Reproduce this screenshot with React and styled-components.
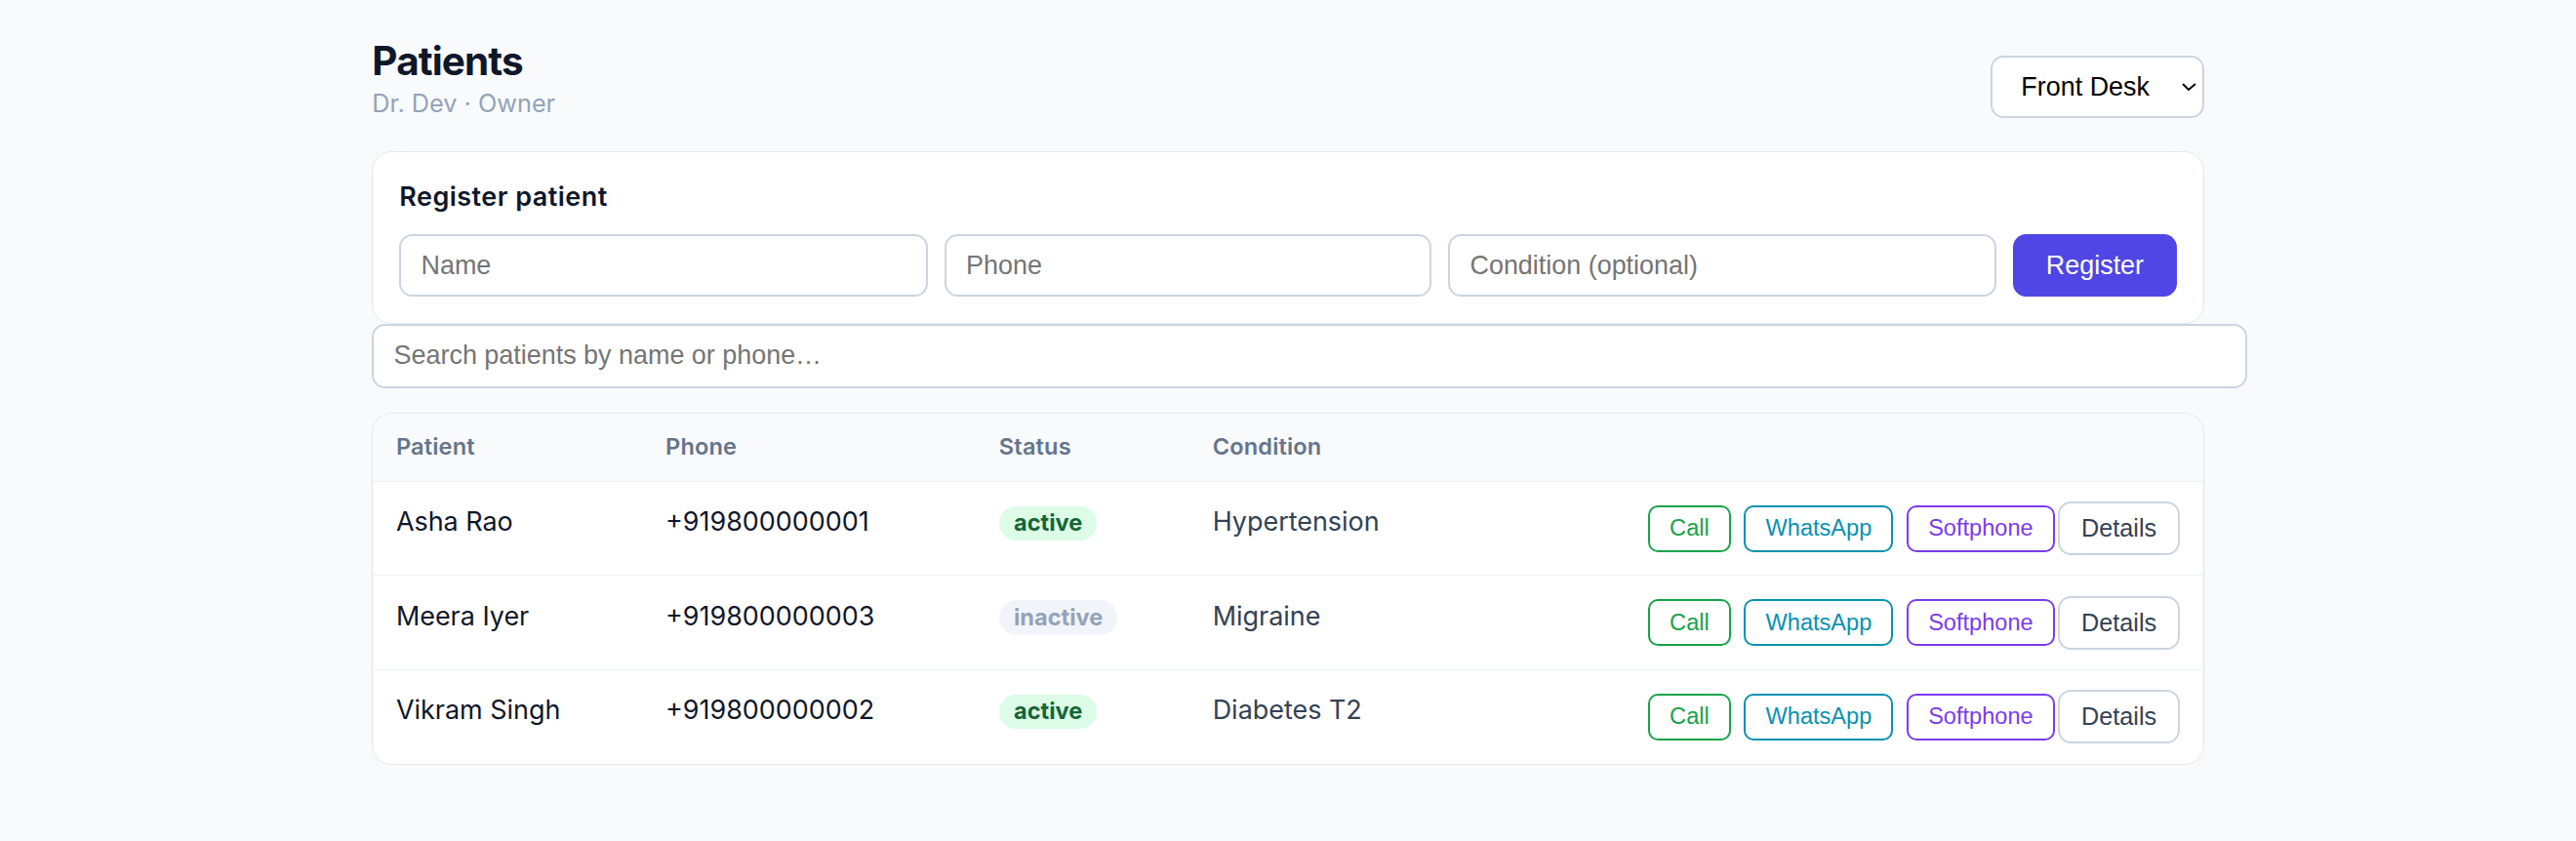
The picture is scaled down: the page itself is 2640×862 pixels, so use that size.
import React from 'react'
import styled, { createGlobalStyle } from 'styled-components'

// the reference was captured at ~1.68x, so the page is authored in css px and zoomed
const GlobalStyle = createGlobalStyle`
  html {
    zoom: 1.6837;
    background: #f8fafc;
  }
  body {
    margin: 0;
    background: #f8fafc;
    font-family: Inter, "Noto Sans", sans-serif;
    color: #0f172a;
  }
`

const patients = [
  { name: 'Asha Rao', phone: '+919800000001', status: 'active', condition: 'Hypertension' },
  { name: 'Meera Iyer', phone: '+919800000003', status: 'inactive', condition: 'Migraine' },
  { name: 'Vikram Singh', phone: '+919800000002', status: 'active', condition: 'Diabetes T2' },
]

function App() {
  return (
    <>
      <GlobalStyle />
      <Page>
        <Header>
          <div>
            <Title>Patients</Title>
            <Subtitle>Dr. Dev · Owner</Subtitle>
          </div>
          <RoleSelect defaultValue="Front Desk">
            <option>Front Desk</option>
            <option>Doctor</option>
            <option>Owner</option>
          </RoleSelect>
        </Header>

        <Card>
          <CardTitle>Register patient</CardTitle>
          <FormRow>
            <Field placeholder="Name" />
            <Field placeholder="Phone" />
            <Field placeholder="Condition (optional)" />
            <PrimaryButton>Register</PrimaryButton>
          </FormRow>
        </Card>

        <Search placeholder="Search patients by name or phone…" />

        <TableCard>
          <HeadRow>
            <HeadCell>Patient</HeadCell>
            <HeadCell>Phone</HeadCell>
            <HeadCell>Status</HeadCell>
            <HeadCell>Condition</HeadCell>
            <HeadCell />
          </HeadRow>
          {patients.map((p) => (
            <Row key={p.phone}>
              <Cell>{p.name}</Cell>
              <Cell>{p.phone}</Cell>
              <Cell>
                <Badge $active={p.status === 'active'}>{p.status}</Badge>
              </Cell>
              <Cell $muted>{p.condition}</Cell>
              <Actions>
                <Channels>
                  <ChannelButton $tone="#16a34a">Call</ChannelButton>
                  <ChannelButton $tone="#0891b2">WhatsApp</ChannelButton>
                  <ChannelButton $tone="#7c3aed">Softphone</ChannelButton>
                </Channels>
                <DetailsButton>Details</DetailsButton>
              </Actions>
            </Row>
          ))}
        </TableCard>
      </Page>
    </>
  )
}

export default App

// 1.2px so that the zoomed border lands on two device pixels, as in the reference
const line = '1.2px solid'

const Page = styled.div`
  max-width: 1115px;
  margin: 0 auto;
  padding: 23px 0 40px;
`

const Header = styled.div`
  display: flex;
  justify-content: space-between;
  align-items: flex-end;
  margin-bottom: 20px;
`

const Title = styled.h1`
  margin: 0 0 2px;
  font-size: 24px;
  line-height: 29px;
  font-weight: 700;
  letter-spacing: -0.5px;
  color: #0f172a;
`

const Subtitle = styled.div`
  font-size: 15px;
  line-height: 18px;
  color: #94a3b8;
`

const controlFont = `
  font-family: "Liberation Sans", Arial, sans-serif;
  font-size: 16px;
`

const RoleSelect = styled.select`
  ${controlFont}
  height: 38px;
  width: 130px;
  padding: 0 8px 0 14px;
  border: ${line} #cbd5e1;
  border-radius: 8px;
  background: #fff;
  color: #000;
`

const Card = styled.div`
  background: #fff;
  border: 1px solid #e2e8f0;
  border-radius: 12px;
  padding: 16px;
`

const CardTitle = styled.h3`
  margin: 0 0 12px;
  font-size: 16px;
  line-height: 22px;
  font-weight: 600;
  letter-spacing: 0.3px;
  color: #0f172a;
`

const FormRow = styled.div`
  display: grid;
  grid-template-columns: 321fr 296fr 333fr auto;
  gap: 10px;
`

const Field = styled.input`
  ${controlFont}
  min-width: 0;
  height: 38px;
  box-sizing: border-box;
  padding: 0 12px;
  border: ${line} #cbd5e1;
  border-radius: 8px;
  background: #fff;
  &::placeholder {
    color: #757575;
  }
`

const PrimaryButton = styled.button`
  ${controlFont}
  height: 38px;
  padding: 0 20px;
  border: none;
  border-radius: 8px;
  background: #4f46e5;
  color: #fff;
`

const Search = styled.input`
  ${controlFont}
  display: block;
  width: 100%;
  height: 18.6px;
  margin: 0 0 15px;
  padding: 9px 12px;
  border: ${line} #cbd5e1;
  border-radius: 8px;
  background: #fff;
  &::placeholder {
    color: #757575;
  }
`

const TableCard = styled.div`
  background: #fff;
  border: 1px solid #e2e8f0;
  border-radius: 12px;
  overflow: hidden;
`

const columns = `164px 203px 130px 1fr auto`

const HeadRow = styled.div`
  display: grid;
  grid-template-columns: ${columns};
  background: #f8fafc;
  border-bottom: 1px solid #eef2f6;
`

const HeadCell = styled.div`
  padding: 12px 14px;
  font-size: 14px;
  line-height: 17px;
  font-weight: 600;
  letter-spacing: 0.1px;
  color: #64748b;
`

const Row = styled.div`
  display: grid;
  grid-template-columns: ${columns};
  align-items: start;
  border-bottom: 1px solid #eef2f6;
  &:last-child {
    border-bottom: none;
  }
`

const Cell = styled.div`
  padding: 12px 14px;
  font-size: 16px;
  line-height: 24px;
  color: ${(p) => (p.$muted ? '#334155' : '#0f172a')};
`

const Badge = styled.span`
  display: inline-block;
  padding: 2px 9px;
  border-radius: 999px;
  font-size: 14px;
  line-height: 17px;
  font-weight: 700;
  background: ${(p) => (p.$active ? '#dcfce7' : '#f1f5f9')};
  color: ${(p) => (p.$active ? '#166534' : '#94a3b8')};
`

const Actions = styled.div`
  display: flex;
  align-items: center;
  justify-content: flex-end;
  padding: 12px 14px;
`

const Channels = styled.div`
  display: flex;
  gap: 8px;
`

const ChannelButton = styled.button`
  font-family: "Liberation Sans", Arial, sans-serif;
  font-size: 14px;
  line-height: 16px;
  padding: 5px 12px;
  border: ${line} ${(p) => p.$tone};
  border-radius: 6px;
  background: #fff;
  color: ${(p) => p.$tone};
`

const DetailsButton = styled.button`
  font-family: "Liberation Sans", Arial, sans-serif;
  font-size: 15px;
  line-height: 18.4px;
  margin-left: 2px;
  padding: 6px 13px;
  border: ${line} #cbd5e1;
  border-radius: 8px;
  background: #fff;
  color: #334155;
`
